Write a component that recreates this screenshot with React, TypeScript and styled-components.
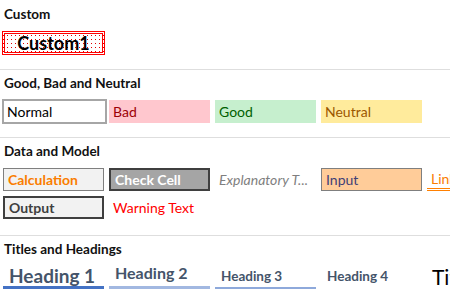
import styled, { createGlobalStyle, css } from 'styled-components'

const Global = createGlobalStyle`
  html, body {
    margin: 0;
    padding: 0;
    background: #fff;
    overflow: hidden;
  }
  body {
    width: 450px;
    height: 300px;
    font-family: Lato, "Open Sans", sans-serif;
  }
`

const Gallery = styled.div`
  width: 450px;
  height: 300px;
  overflow: hidden;
  padding-top: 1px;
  box-sizing: border-box;
`

const Section = styled.div<{ $pad?: number; $last?: boolean }>`
  padding-bottom: ${(p) => (p.$last ? 0 : p.$pad ?? 14)}px;
  border-bottom: ${(p) => (p.$last ? 'none' : '1px solid #dedede')};
`

const Header = styled.div`
  height: 26px;
  line-height: 26px;
  padding-left: 4px;
  margin-bottom: 4px;
  font-size: 13.5px;
  font-weight: bold;
  color: #111;
`

const Row = styled.div`
  display: flex;
  gap: 5px;
  padding-left: 3px;
  & + & {
    margin-top: 5px;
  }
`

type Variant =
  | 'normal'
  | 'bad'
  | 'good'
  | 'neutral'
  | 'calc'
  | 'check'
  | 'explain'
  | 'input'
  | 'linked'
  | 'output'
  | 'warning'

const variants: Record<Variant, ReturnType<typeof css>> = {
  normal: css`
    color: #000;
    &::after {
      content: '';
      position: absolute;
      left: -1px;
      right: -3px;
      top: -1px;
      bottom: -1px;
      border: 2px solid #a6a6a6;
    }
  `,
  bad: css`
    background: #ffc7ce;
    color: #9c0006;
  `,
  good: css`
    background: #c6efce;
    color: #006100;
  `,
  neutral: css`
    background: #ffeb9c;
    color: #9c5700;
  `,
  calc: css`
    background: #f2f2f2;
    color: #fa7d00;
    font-weight: bold;
    border: 1px solid #7f7f7f;
  `,
  check: css`
    background: #a5a5a5;
    color: #fff;
    font-weight: bold;
    border: 2px solid #3f3f3f;
  `,
  explain: css`
    color: #7f7f7f;
    font-style: italic;
  `,
  input: css`
    background: #ffcc99;
    color: #3f3f76;
    border: 1px solid #7f7f7f;
  `,
  linked: css`
    color: #fa7d00;
    border-bottom: 3px double #ff8001;
  `,
  output: css`
    background: #f2f2f2;
    color: #3f3f3f;
    font-weight: bold;
    border: 2px solid #3f3f3f;
  `,
  warning: css`
    color: #ff0000;
  `,
}

const Cell = styled.div<{ $v: Variant }>`
  position: relative;
  flex: none;
  width: 101px;
  height: 23px;
  box-sizing: border-box;
  padding-left: 4px;
  display: flex;
  align-items: center;
  font-size: 14px;
  white-space: nowrap;
  ${(p) => variants[p.$v]}
`

const CustomCell = styled.div`
  flex: none;
  width: 103px;
  height: 24px;
  margin-left: -1px;
  box-sizing: border-box;
  border: 3px double #ff0000;
  display: flex;
  align-items: center;
  justify-content: center;
  font-size: 18px;
  font-weight: 700;
  color: #000;
  background-color: #fff;
  background-image: conic-gradient(from 0deg at 1px 1px, transparent 75%, #e00000 0);
  background-size: 4px 4px;
  background-position: 2px 1px;
`

const headings = {
  h1: css`
    font-size: 19px;
    border-bottom: 3px solid #4472c4;
    padding-bottom: 1px;
  `,
  h2: css`
    font-size: 16px;
    border-bottom: 3px solid #a2b8e1;
    padding-bottom: 5px;
  `,
  h3: css`
    font-size: 13.5px;
    border-bottom: 2px solid #8ea9db;
    padding-bottom: 4px;
  `,
  h4: css`
    font-size: 13.5px;
    padding-bottom: 6px;
  `,
  title: css`
    font-size: 21px;
    font-weight: 400;
    color: #000;
    padding-bottom: 2px;
  `,
}

const HeadingCell = styled.div<{ $h: keyof typeof headings }>`
  flex: none;
  width: 101px;
  height: 23px;
  box-sizing: border-box;
  padding-left: ${(p) => (p.$h === 'title' ? 5 : 6)}px;
  display: flex;
  align-items: flex-end;
  font-weight: bold;
  color: #44546a;
  white-space: nowrap;
  line-height: 1;
  ${(p) => headings[p.$h]}
`

export default function App() {
  return (
    <>
      <Global />
      <Gallery>
        <Section>
          <Header>Custom</Header>
          <Row>
            <CustomCell>Custom1</CustomCell>
          </Row>
        </Section>
        <Section>
          <Header>Good, Bad and Neutral</Header>
          <Row>
            <Cell $v="normal">Normal</Cell>
            <Cell $v="bad">Bad</Cell>
            <Cell $v="good">Good</Cell>
            <Cell $v="neutral">Neutral</Cell>
          </Row>
        </Section>
        <Section $pad={16}>
          <Header>Data and Model</Header>
          <Row>
            <Cell $v="calc">Calculation</Cell>
            <Cell $v="check">Check Cell</Cell>
            <Cell $v="explain">Explanatory T...</Cell>
            <Cell $v="input">Input</Cell>
            <Cell $v="linked">Linked Cell</Cell>
          </Row>
          <Row>
            <Cell $v="output">Output</Cell>
            <Cell $v="warning">Warning Text</Cell>
          </Row>
        </Section>
        <Section $last>
          <Header>Titles and Headings</Header>
          <Row>
            <HeadingCell $h="h1">Heading 1</HeadingCell>
            <HeadingCell $h="h2">Heading 2</HeadingCell>
            <HeadingCell $h="h3">Heading 3</HeadingCell>
            <HeadingCell $h="h4">Heading 4</HeadingCell>
            <HeadingCell $h="title">Title</HeadingCell>
          </Row>
        </Section>
      </Gallery>
    </>
  )
}
